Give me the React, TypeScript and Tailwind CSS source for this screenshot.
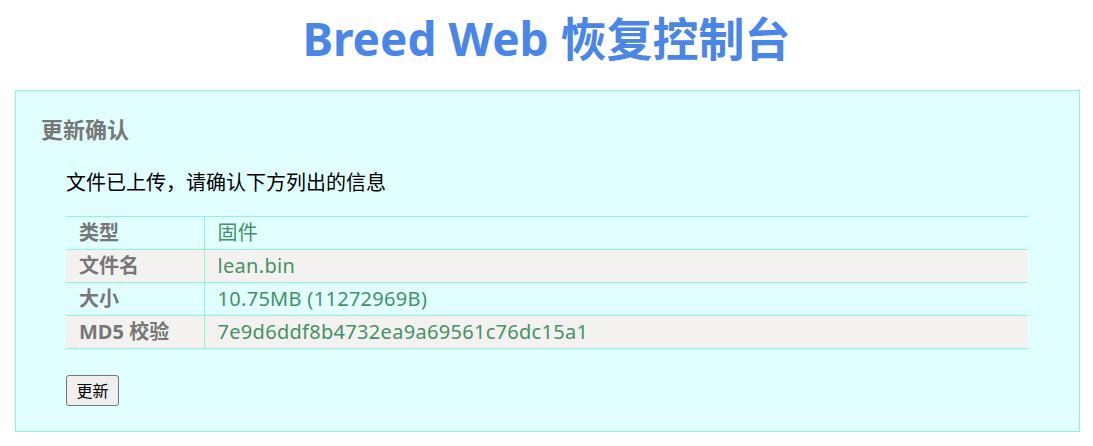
import React from 'react';

const rows = [
    { label: '类型', value: '固件' },
    { label: '文件名', value: 'lean.bin' },
    { label: '大小', value: '10.75MB (11272969B)' },
    { label: 'MD5 校验', value: '7e9d6ddf8b4732ea9a69561c76dc15a1' },
];

export default function App() {
    return (
        <div className="min-h-[446px] w-full bg-white font-['Noto_Sans','Noto_Sans_CJK_SC',sans-serif]">
            {/* Title */}
            <h1 className="pt-[6px] pb-[20px] text-center text-[46px] font-bold leading-[64px] text-[#4a86e8]">
                Breed Web 恢复控制台
            </h1>

            {/* Confirm panel */}
            <div className="ml-[15px] mr-[13px] h-[342px] border border-[#8ff5d2] bg-[#e0fffe] px-[25px] pt-[23px]">
                <h2 className="text-[22px] font-bold leading-[30px] text-[#777]">更新确认</h2>

                <div className="pl-[25px] pr-[26px]">
                    <p className="mt-[25px] text-[20px] leading-[28px] text-black">
                        文件已上传，请确认下方列出的信息
                    </p>

                    <table className="mt-[19px] w-full border-collapse border-t border-[#8ff5d2] text-[20px]">
                        <tbody>
                            {rows.map((r, i) => (
                                <tr
                                    key={r.label}
                                    className={`h-[33px] border-b border-[#8ff5d2] ${i % 2 === 1 ? 'bg-[#f3f2f0]' : ''}`}
                                >
                                    <td className="w-[138px] border-r border-[#8ff5d2] pl-[13px] font-bold leading-[32px] text-[#777]">
                                        {r.label}
                                    </td>
                                    <td className="pl-[13px] leading-[32px] tracking-[0.3px] text-[#449266]">{r.value}</td>
                                </tr>
                            ))}
                        </tbody>
                    </table>

                    <button className="mt-[26px] h-[31px] w-[53px] rounded-[3px] border border-[#767676] bg-[#efefef] text-[16px] leading-[20px] text-black">
                        更新
                    </button>
                </div>
            </div>
        </div>
    );
}
